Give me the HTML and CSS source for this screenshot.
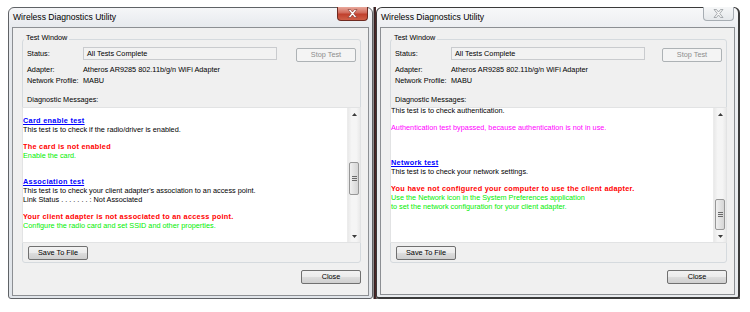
FILE: index.html
```html
<!DOCTYPE html>
<html lang="en">
  <head>
    <meta charset="UTF-8" />
    <title>Wireless Diagnostics Utility</title>
    <link rel="stylesheet" href="styles.css">
  </head>

  <body>
    <div class="desktop">
      <!-- active window -->
      <div class="window active">
        <div class="titlebar">
          <span class="title">Wireless Diagnostics Utility</span>
          <span class="close-btn">
            <svg width="11" height="9" viewBox="0 0 11 9"><path d="M1 0.5h2.5l2 2.5 2-2.5h2.5l-3.2 4 3.2 4h-2.5l-2-2.5-2 2.5h-2.5l3.2-4z" fill="#fff" stroke="#7a2b22" stroke-width="0.6"/></svg>
          </span>
        </div>
        <div class="client">
          <fieldset class="group">
            <legend>Test Window</legend>
            <div class="status-row">
              <span class="label">Status:</span>
              <span class="status-field">All Tests Complete</span>
              <button class="btn stop" disabled>Stop Test</button>
            </div>
            <div class="info-row first"><span class="label">Adapter:</span><span>Atheros AR9285 802.11b/g/n WiFi Adapter</span></div>
            <div class="info-row"><span class="label">Network Profile:</span><span>MABU</span></div>
            <div class="diag-label">Diagnostic Messages:</div>
            <div class="messages">
              <div class="msg-text top-blank">
                <p class="link">Card enable test</p>
                <p>This test is to check if the radio/driver is enabled.</p>
                <p class="err gap1">The card is not enabled</p>
                <p class="hint">Enable the card.</p>
                <p class="link gap2">Association test</p>
                <p>This test is to check your client adapter's association to an access point.</p>
                <p class="pre">Link Status . . . . . . . : Not Associated</p>
                <p class="err gap1">Your client adapter is not associated to an access point.</p>
                <p class="hint">Configure the radio card and set SSID and other properties.</p>
              </div>
              <div class="scrollbar">
                <span class="arrow"><svg width="5" height="3" viewBox="0 0 5 3"><path d="M0 3L2.5 0 5 3z" fill="#3c3c3c"/></svg></span>
                <span class="thumb thumb-left"><i></i><i></i><i></i></span>
                <span class="arrow down"><svg width="5" height="3" viewBox="0 0 5 3"><path d="M0 0L2.5 3 5 0z" fill="#3c3c3c"/></svg></span>
              </div>
            </div>
            <button class="btn save">Save To File</button>
          </fieldset>
          <div class="footer"><button class="btn">Close</button></div>
        </div>
      </div>

      <div class="desk-gap"></div>

      <!-- inactive window -->
      <div class="window inactive">
        <div class="titlebar">
          <span class="title">Wireless Diagnostics Utility</span>
          <span class="close-btn">
            <svg width="11" height="9" viewBox="0 0 11 9"><path d="M1 0.5h2.5l2 2.5 2-2.5h2.5l-3.2 4 3.2 4h-2.5l-2-2.5-2 2.5h-2.5l3.2-4z" fill="#f4f4f4" stroke="#8a8f95" stroke-width="0.7"/></svg>
          </span>
        </div>
        <div class="client">
          <fieldset class="group">
            <legend>Test Window</legend>
            <div class="status-row">
              <span class="label">Status:</span>
              <span class="status-field">All Tests Complete</span>
              <button class="btn stop" disabled>Stop Test</button>
            </div>
            <div class="info-row first"><span class="label">Adapter:</span><span>Atheros AR9285 802.11b/g/n WiFi Adapter</span></div>
            <div class="info-row"><span class="label">Network Profile:</span><span>MABU</span></div>
            <div class="diag-label">Diagnostic Messages:</div>
            <div class="messages">
              <div class="msg-text scrolled">
                <p>This test is to check authentication.</p>
                <p class="info gap1">Authentication test bypassed, because authentication is not in use.</p>
                <p class="link gap3">Network test</p>
                <p>This test is to check your network settings.</p>
                <p class="err gap1">You have not configured your computer to use the client adapter.</p>
                <p class="hint">Use the Network icon in the System Preferences application</p>
                <p class="hint">to set the network configuration for your client adapter.</p>
              </div>
              <div class="scrollbar">
                <span class="arrow"><svg width="5" height="3" viewBox="0 0 5 3"><path d="M0 3L2.5 0 5 3z" fill="#3c3c3c"/></svg></span>
                <span class="thumb thumb-right"><i></i><i></i><i></i></span>
                <span class="arrow down"><svg width="5" height="3" viewBox="0 0 5 3"><path d="M0 0L2.5 3 5 0z" fill="#3c3c3c"/></svg></span>
              </div>
            </div>
            <button class="btn save">Save To File</button>
          </fieldset>
          <div class="footer"><button class="btn">Close</button></div>
        </div>
      </div>
    </div>
  </body>
</html>
```

FILE: styles.css
```css
body {
  margin: 0;
  background: #fff;
  font-family: "Liberation Sans", Arial, sans-serif;
  color: #000;
}

.desktop {
  display: flex;
  align-items: flex-start;
  padding: 7px 0 0 8px;
}

.window {
  width: 365px;
  height: 292px;
  box-sizing: border-box;
  display: flex;
  flex-direction: column;
  padding: 0 3px 2px 3px;
  border: 1px solid #5f6266;
  border-radius: 6px 6px 3px 3px;
  background: linear-gradient(#f5f6f8, #e6e9ed 20px, #e1e5ea);
}

.window.inactive {
  width: 364px;
  border-color: #3a3a3a;
  border-right-width: 2px;
  border-bottom-width: 2px;
  background: linear-gradient(#f7f8f9, #eceef1 20px, #e8ebee);
  box-shadow: 0 2px 0 #4a4a4a;
}

.desk-gap {
  width: 3px;
  height: 292px;
  background: linear-gradient(90deg, #d8d8d8, #2a2224 40%, #5a2626);
}

.titlebar {
  height: 19px;
  display: flex;
  justify-content: space-between;
  align-items: flex-start;
}

.title {
  font-size: 8.6px;
  line-height: 10px;
  margin: 4px 0 0 1px;
}

.close-btn {
  width: 31px;
  height: 14px;
  box-sizing: border-box;
  margin: -1px 1px 0 0;
  display: flex;
  align-items: center;
  justify-content: center;
  border: 1px solid #6e2a20;
  border-top: none;
  border-radius: 0 0 4px 4px;
  background: linear-gradient(#e9a99c, #d0695a 45%, #c0402d 55%, #cf5f47);
}

.inactive .close-btn {
  border: 1px solid #a7adb3;
  border-top: none;
  background: linear-gradient(#f6f7f8, #e5e8eb);
}

.client {
  flex: 1;
  display: flex;
  flex-direction: column;
  padding: 0 7px 0 9px;
  border: 1px solid #8c8f93;
  background: #f0f0f0;
  font-size: 7.3px;
}

.group {
  margin: 5px 0 0 0;
  padding: 0 4px 2px 4px;
  min-width: 0;
  border: 1px solid #d5dade;
  border-radius: 3px;
}

.group legend {
  margin-left: -3px;
  padding: 0 2px 4px 2px;
  line-height: 9px;
}

.status-row {
  display: flex;
  align-items: flex-start;
}

.label {
  width: 56px;
  flex: none;
}

.status-row .label {
  line-height: 13px;
  margin-top: 1px;
}

.status-field {
  width: 194px;
  height: 13px;
  box-sizing: border-box;
  margin-top: 1px;
  padding-left: 3px;
  line-height: 11px;
  border: 1px solid #c9cbce;
  background: #f2f2f2;
}

.btn {
  height: 14px;
  width: 60px;
  box-sizing: border-box;
  padding: 0;
  font-family: inherit;
  font-size: 7.3px;
  line-height: 12px;
  color: #000;
  border: 1px solid #707070;
  border-radius: 2px;
  background: linear-gradient(#f2f2f2, #ebebeb 50%, #dddddd 50%, #cfcfcf);
}

.btn.stop {
  margin: 2px 0 0 auto;
  color: #8d8d8d;
  border-color: #adb2b5;
  background: #f4f4f4;
}

.info-row {
  display: flex;
  line-height: 10px;
  margin-top: 1px;
}

.info-row.first {
  margin-top: 3px;
}

.diag-label {
  margin-top: 9px;
  line-height: 10px;
}

.messages {
  height: 136px;
  margin: 2px -5px 0 -5px;
  display: flex;
  box-sizing: border-box;
  border: 1px solid #e2e3e4;
  background: #fff;
  overflow: hidden;
}

.msg-text {
  flex: 1;
}

.msg-text p {
  margin: 0;
  line-height: 8.75px;
  white-space: nowrap;
}

.top-blank {
  padding-top: 8.75px;
}

.scrolled {
  margin-top: -1.4px;
}

.gap1 { margin-top: 8.75px !important; }
.gap2 { margin-top: 17.5px !important; }
.gap3 { margin-top: 26.25px !important; }

.pre {
  white-space: pre;
}

.link {
  font-weight: bold;
  letter-spacing: 0.3px;
  color: #0000ff;
  text-decoration: underline;
}

.err {
  font-weight: bold;
  letter-spacing: 0.28px;
  color: #ff0000;
}

.hint {
  color: #00ee00;
}

.info {
  color: #ff00ff;
}

.scrollbar {
  width: 12px;
  display: flex;
  flex-direction: column;
  align-items: center;
  border-left: 1px solid #ececec;
  background: linear-gradient(90deg, #e9e9e9, #f5f5f5 30%, #f5f5f5 70%, #e9e9e9);
}

.arrow {
  height: 12px;
  display: flex;
  align-items: center;
  justify-content: center;
}

.arrow.down {
  margin-top: auto;
}

.thumb {
  width: 10px;
  box-sizing: border-box;
  display: flex;
  flex-direction: column;
  align-items: center;
  justify-content: center;
  gap: 1px;
  border: 1px solid #979797;
  border-radius: 2px;
  background: linear-gradient(90deg, #f0f0f0, #e2e2e2 50%, #d6d6d6);
}

.thumb i {
  width: 5px;
  height: 1px;
  background: #6a6a6a;
}

.thumb-left {
  margin-top: 42px;
  height: 33px;
}

.thumb-right {
  margin-top: 79px;
  height: 31px;
}

.btn.save {
  margin: 3px 0 0 1px;
}

.footer {
  display: flex;
  justify-content: flex-end;
  margin-top: 7px;
}
```
